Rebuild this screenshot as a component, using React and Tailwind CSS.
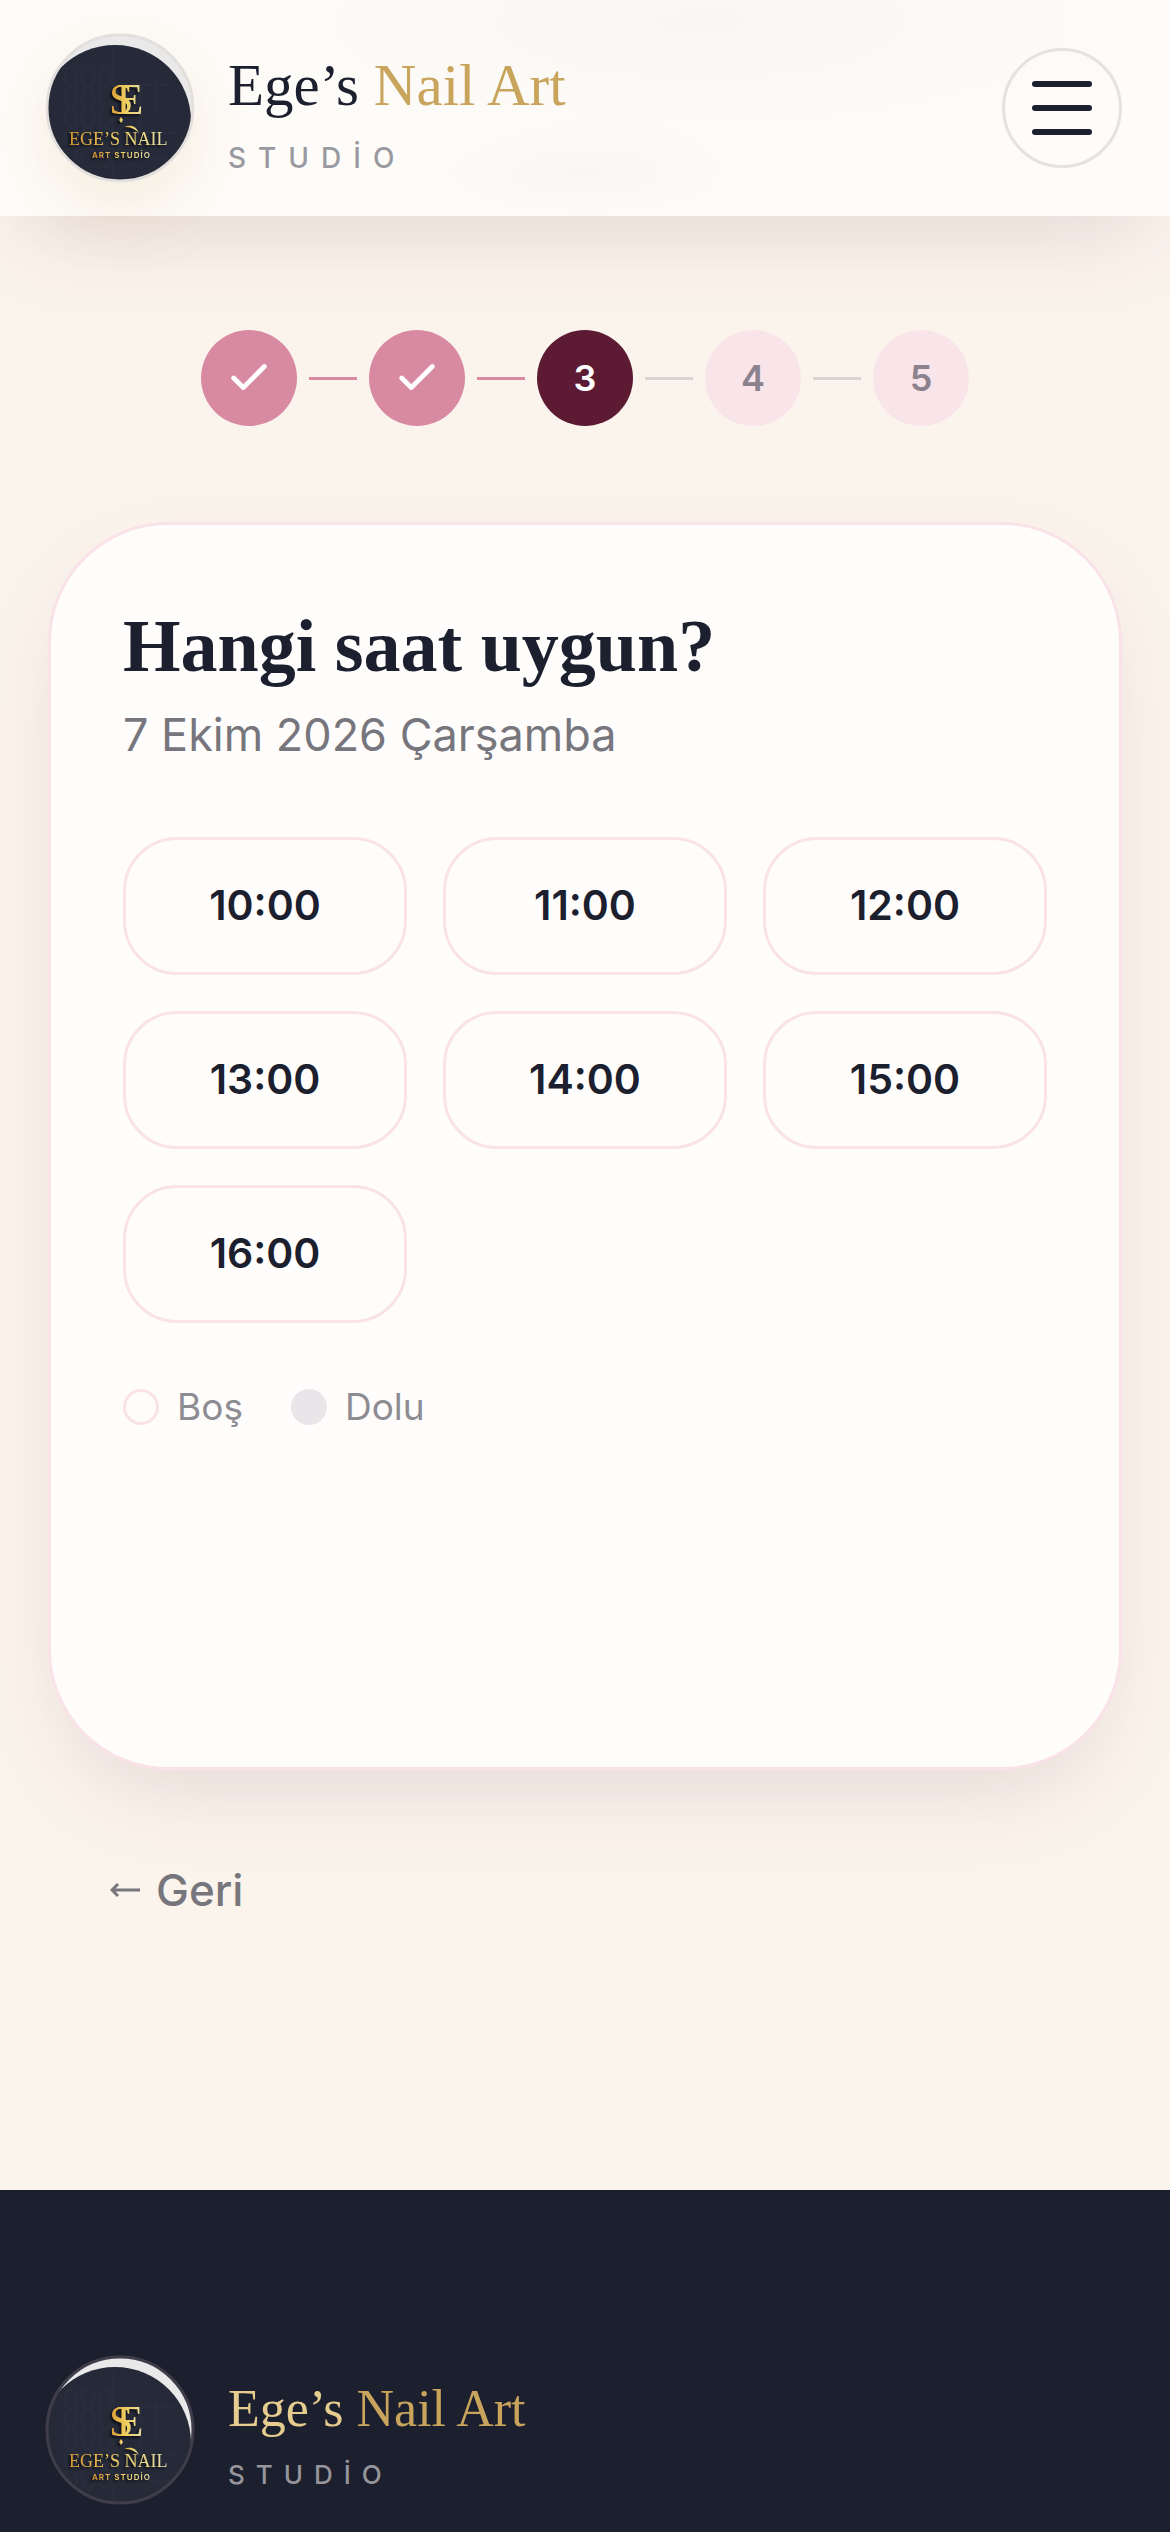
import { Check } from "lucide-react";
import clsx from "clsx";

const steps = [1, 2, 3, 4, 5];
const currentStep = 3;
const hours = ["10:00", "11:00", "12:00", "13:00", "14:00", "15:00", "16:00"];

function Logo({ id, ring }) {
  return (
    <svg
      viewBox="0 0 150 150"
      className="size-[150px] shrink-0"
      role="img"
      aria-label="Ege’s Nail Art Studio">
      <defs>
        <clipPath id={`${id}-clip`}>
          <circle cx="75" cy="75" r="73" />
        </clipPath>
        <linearGradient id={`${id}-gold`} x1="0" x2="1" y1="0" y2="0">
          <stop offset="0" stopColor="#d9962f" />
          <stop offset="0.5" stopColor="#f0cf62" />
          <stop offset="1" stopColor="#e3dfa6" />
        </linearGradient>
      </defs>
      <g clipPath={`url(#${id}-clip)`}>
        <rect width="150" height="150" fill="#e9e9ea" />
        <ellipse cx="70" cy="88" rx="76" ry="76" fill="#262a38" />
        <g fill="none" stroke="#292d3b" strokeWidth="3">
          {[26, 43, 60].map(x =>
            [44, 64, 84, 104, 124].map(y => (
              <ellipse key={`${x}-${y}`} cx={x} cy={y} rx="6" ry="10" />
            ))
          )}
          <path d="M68 16V150M86 52H128M96 52V126M112 44V84M84 100H134M100 126H128" />
        </g>
        <g
          fill={`url(#${id}-gold)`}
          fontFamily="'Liberation Serif', serif"
          style={{ filter: "drop-shadow(-2px 2px 1px #0d0f18)" }}>
          <text x="64" y="81" fontSize="44">
            S<tspan dx="-17">E</tspan>
          </text>
          <path d="M76 84l2 3-2 3-2-3z" />
          <text x="24" y="112" fontSize="18">
            EGE’S NAIL
          </text>
          <path d="M79 94c7-3 12-1 15 6-5-5-9-6-15-6z" />
          <text
            x="47"
            y="125"
            fontSize="8"
            fontWeight="600"
            letterSpacing="1"
            fontFamily="Inter, sans-serif">
            ART STUDİO
          </text>
        </g>
      </g>
      <circle
        cx="75"
        cy="75"
        r="73"
        fill="none"
        stroke={ring}
        strokeWidth="3"
      />
    </svg>
  );
}

function StepCircle({ step }) {
  return (
    <li
      className={clsx(
        "flex size-24 items-center justify-center rounded-full text-[36px] font-semibold",
        step < currentStep && "bg-[#d88aa2] text-white",
        step === currentStep && "bg-[#5c1a33] text-white",
        step > currentStep && "bg-[#f8e4e9] text-[#8b828d]"
      )}>
      {step < currentStep ? <Check size={46} strokeWidth={2.5} /> : step}
    </li>
  );
}

function App() {
  return (
    <div className="flex min-h-screen flex-col overflow-hidden bg-[#fbf4ed] font-[Inter,'Noto_Sans',sans-serif] text-[#1c1f2e]">
      <header className="flex h-[216px] items-center justify-between bg-[#fefcf9] bg-[radial-gradient(ellipse_at_50%_80%,#f8f7f4,transparent_22%),radial-gradient(ellipse_at_60%_10%,#f9f7f4,transparent_50%)] pr-12 pl-[45px] shadow-[0_36px_96px_-24px_rgba(92,50,51,0.15)]">
        <a href="#" className="flex items-center gap-[33px]">
          <span className="rounded-full shadow-[0_24px_72px_rgba(201,162,90,0.18)]">
            <Logo id="top" ring="#e3dfdc" />
          </span>
          <span className="flex flex-col gap-4 pt-3">
            <span className="font-['Liberation_Serif',serif] text-[59px] leading-[72px]">
              Ege’s <span className="text-[#c9a45c]">Nail Art</span>
            </span>
            <span className="text-[28px] leading-[42px] font-medium tracking-[12px] text-[#9a99a0]">
              STUDİO
            </span>
          </span>
        </a>
        <button
          type="button"
          aria-label="Menü"
          className="flex size-[120px] flex-col items-center justify-center gap-[18px] rounded-full border-3 border-[#e4e3e2]">
          <span className="h-[6px] w-[60px] rounded-full bg-[#1c1f2e]" />
          <span className="h-[6px] w-[60px] rounded-full bg-[#1c1f2e]" />
          <span className="h-[6px] w-[60px] rounded-full bg-[#1c1f2e]" />
        </button>
      </header>

      <main className="flex flex-col px-12 pt-[114px] pb-[267px]">
        <ol className="flex items-center justify-center gap-3">
          {steps.map(step => (
            <div key={step} className="contents">
              {step > 1 && (
                <li
                  aria-hidden="true"
                  className={clsx(
                    "h-[3px] w-12",
                    step <= currentStep ? "bg-[#d88aa2]" : "bg-[#d9d4d1]"
                  )}
                />
              )}
              <StepCircle step={step} />
            </div>
          ))}
        </ol>

        <section className="mt-24 min-h-[1248px] rounded-[120px] border-3 border-[#f9e2e8] bg-[#fffdfc] p-[72px] shadow-[0_36px_96px_-24px_rgba(92,50,51,0.15)]">
          <h1 className="mt-1 font-['Liberation_Serif',serif] text-[74px] leading-[90px] font-bold">
            Hangi saat uygun?
          </h1>
          <p className="mt-[14px] text-[45px] leading-[60px] text-[#77767d]">
            7 Ekim 2026 Çarşamba
          </p>
          <div className="mt-[72px] grid grid-cols-3 gap-9">
            {hours.map(hour => (
              <button
                key={hour}
                type="button"
                className="h-[138px] rounded-[54px] border-3 border-[#f9e2e8] text-[41px] font-semibold">
                {hour}
              </button>
            ))}
          </div>
          <div className="mt-[57px] flex gap-12 text-[37px] leading-[54px] text-[#8d8c93]">
            <span className="flex items-center gap-[18px]">
              <span className="size-9 rounded-full border-3 border-[#f9e2e8]" />
              Boş
            </span>
            <span className="flex items-center gap-[18px]">
              <span className="size-9 rounded-full bg-[#e8e6e8]" />
              Dolu
            </span>
          </div>
        </section>

        <button
          type="button"
          className="mt-[87px] ml-[62px] flex items-center gap-4 self-start text-[44px] leading-[66px] font-medium text-[#77767d]">
          <svg
            viewBox="0 0 30 18"
            className="h-[18px] w-[30px]"
            fill="none"
            stroke="currentColor"
            strokeWidth="3"
            aria-hidden="true">
            <path d="M2 9h28M8 3L2 9l6 6" />
          </svg>
          Geri
        </button>
      </main>

      <footer className="flex-1 bg-[#1c1f2e] pt-[165px] pr-12 pl-[45px]">
        <a href="#" className="flex items-center gap-[33px]">
          <Logo id="bottom" ring="#3f3d49" />
          <span className="flex flex-col gap-[18px] pt-3">
            <span className="font-['Liberation_Serif',serif] text-[52px] leading-[60px] text-[#e6cd8f]">
              Ege’s <span className="text-[#c9a45c]">Nail Art</span>
            </span>
            <span className="text-[26px] leading-9 font-medium tracking-[11px] text-[#96959b]">
              STUDİO
            </span>
          </span>
        </a>
      </footer>
    </div>
  );
}

export default App;
